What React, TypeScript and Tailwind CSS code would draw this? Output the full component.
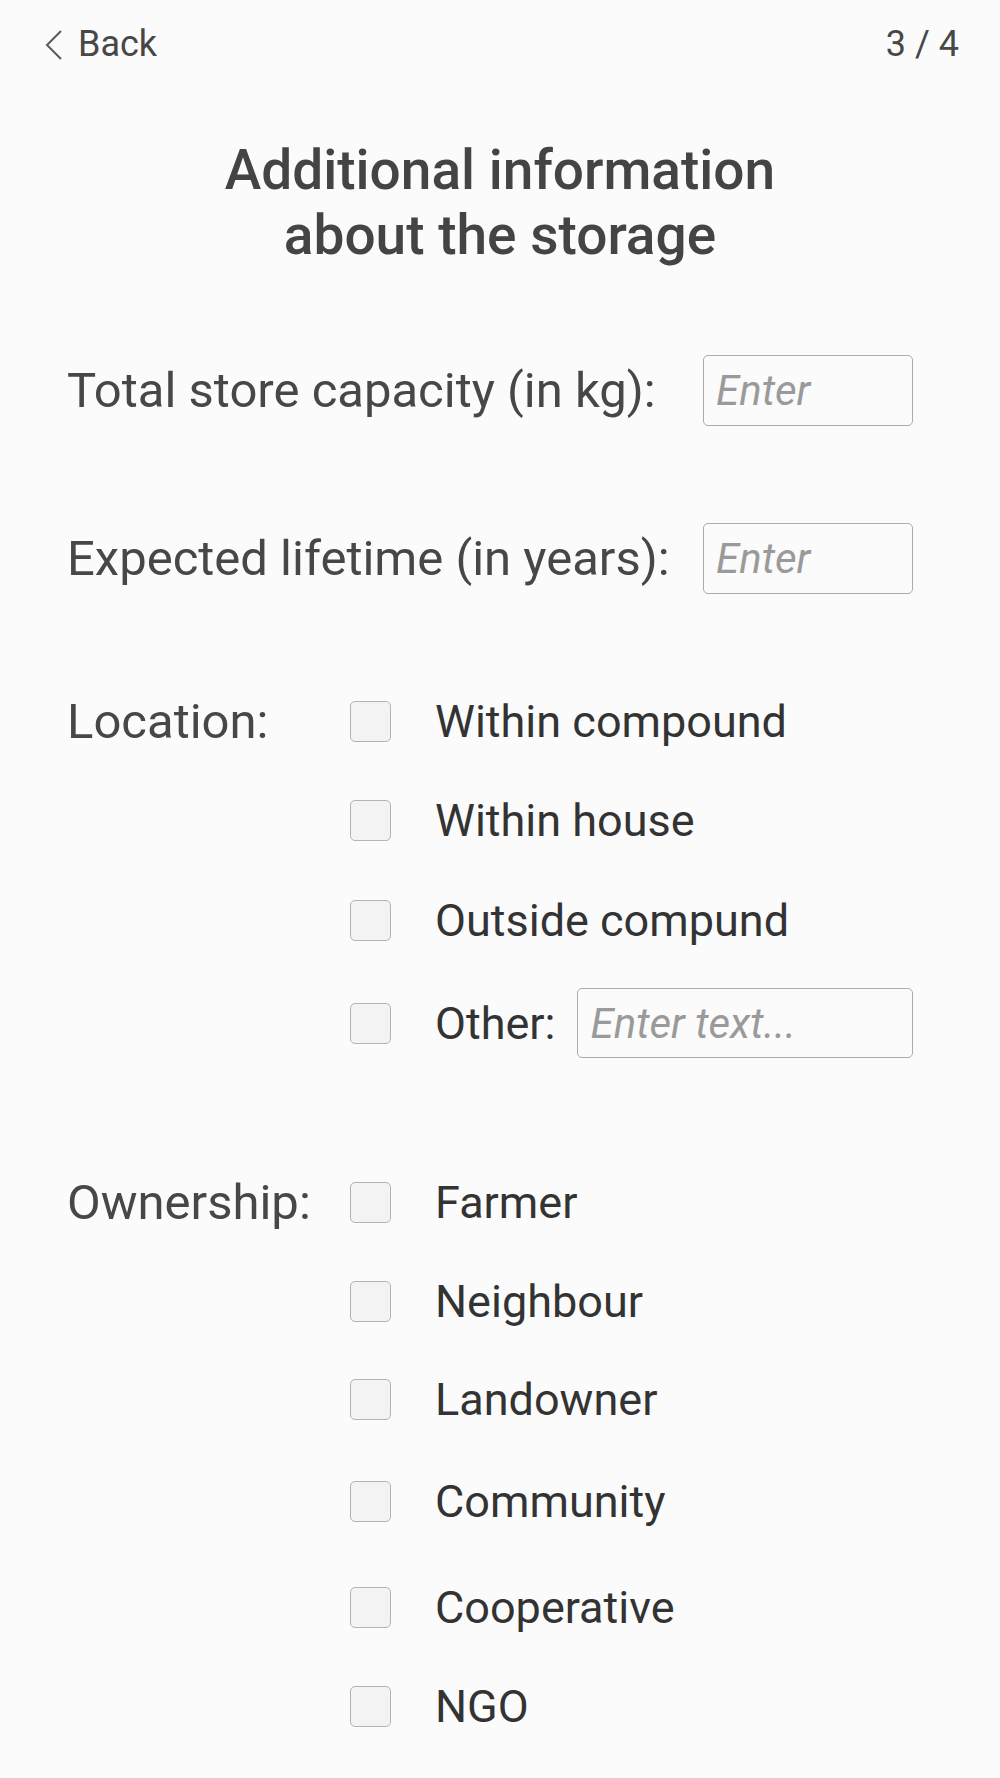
import React from "react";

const locationOptions = [
  { label: "Within compound", cls: "h-[99px]" },
  { label: "Within house", cls: "h-[99px]" },
  { label: "Outside compund", cls: "h-[100px]" },
];

const ownershipOptions = [
  { label: "Farmer", cls: "h-[99px]" },
  { label: "Neighbour", cls: "h-[98px]" },
  { label: "Landowner", cls: "h-[99px]" },
  { label: "Community", cls: "h-[99px] mt-[3px]" },
  { label: "Cooperative", cls: "h-[99px] mt-[7px]" },
  { label: "NGO", cls: "h-[99px]" },
];

function Box() {
  return (
    <input
      type="checkbox"
      className="mr-[44px] h-[41px] w-[41px] shrink-0 appearance-none rounded-[5px] border border-[#b3b3b3] bg-[#f3f3f3]"
    />
  );
}

function Option({ label, cls = "h-[100px]" }: { label: string; cls?: string }) {
  return (
    <div className={`flex items-center ${cls}`}>
      <Box />
      <span className="text-[45px] leading-[53px] text-[#333]">{label}</span>
    </div>
  );
}

function NumberField({ label, className }: { label: string; className: string }) {
  return (
    <div className={`flex h-[71px] items-center ${className}`}>
      <label className="w-[636px] text-[49px] leading-[57px]">{label}</label>
      <input
        placeholder="Enter"
        className="h-[71px] w-[210px] rounded-[5px] border border-[#ababab] bg-transparent px-[12px] text-[42px] outline-none placeholder:italic placeholder:text-[#9a9a9a]"
      />
    </div>
  );
}

export default function App() {
  return (
    <div className="min-h-screen bg-[#fbfbfb] font-['Roboto',sans-serif] text-[#474747]">
      <div className="flex items-center justify-between pl-[45px] pr-[41px] pt-[24px]">
        <div className="flex items-center">
          <svg width="18" height="32" viewBox="0 0 18 32" className="mr-[15px]">
            <path d="M16 2 L2 16 L16 30" fill="none" stroke="#5a5a5a" strokeWidth="2" />
          </svg>
          <span className="text-[36px] leading-[41px]">Back</span>
        </div>
        <span className="text-[36px] leading-[41px]">3 / 4</span>
      </div>

      <h1 className="mt-[73px] text-center text-[55px] font-medium leading-[65px] text-[#444]">
        Additional information
        <br />
        about the storage
      </h1>

      <div className="pl-[67px] pr-[68px]">
        <NumberField label="Total store capacity (in kg):" className="mt-[87px]" />
        <NumberField label="Expected lifetime (in years):" className="mt-[97px]" />

        <div className="mt-[78px] flex">
          <div className="flex h-[99px] w-[283px] items-center text-[49px] leading-[57px]">
            Location:
          </div>
          <div className="flex flex-col">
            {locationOptions.map((o) => (
              <Option key={o.label} label={o.label} cls={o.cls} />
            ))}
            <div className="flex h-[106px] items-center">
              <Box />
              <span className="mr-[22px] text-[45px] leading-[53px] text-[#333]">Other:</span>
              <input
                placeholder="Enter text..."
                className="h-[70px] w-[336px] rounded-[5px] border border-[#ababab] bg-transparent px-[12px] text-[42px] outline-none placeholder:italic placeholder:text-[#9a9a9a]"
              />
            </div>
          </div>
        </div>

        <div className="mt-[77px] flex">
          <div className="flex h-[99px] w-[283px] items-center text-[49px] leading-[57px]">
            Ownership:
          </div>
          <div className="flex flex-col">
            {ownershipOptions.map((o) => (
              <Option key={o.label} label={o.label} cls={o.cls} />
            ))}
          </div>
        </div>
      </div>
    </div>
  );
}
